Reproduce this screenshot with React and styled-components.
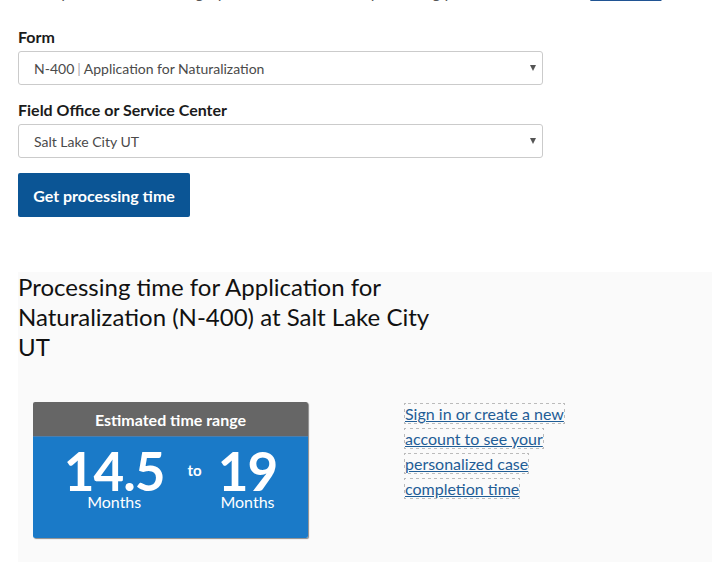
import React from "react";
import styled, { createGlobalStyle } from "styled-components";

const Global = createGlobalStyle`
  html, body { margin: 0; padding: 0; background: #fff; }
  body { font-family: "Lato", "Open Sans", sans-serif; color: #1b1b1b; }
  * { box-sizing: border-box; }
`;

const Page = styled.div`
  padding: 0 0 0 18px;
  overflow: hidden;
  height: 562px;
`;

const Intro = styled.p`
  margin: -18px 0 0 0;
  font-size: 16px;
  line-height: 20px;
  font-style: italic;
  color: #555;
  white-space: nowrap;
`;

const IntroLink = styled.a`
  color: #205493;
  text-decoration: underline;
  text-underline-offset: 2px;
  font-style: normal;
`;

const FormBlock = styled.form`
  width: 525px;
  margin-top: 25px;
  display: flex;
  flex-direction: column;
`;

const Label = styled.label`
  font-weight: 700;
  font-size: 16px;
  line-height: 20px;
  color: #1b1b1b;
  margin-top: ${(p) => p.$top || 0}px;
  margin-bottom: 4px;
`;

const SelectBox = styled.div`
  position: relative;
  height: 34px;
  border: 1px solid #cbcbcb;
  border-radius: 3px;
  background: #fff;
  display: flex;
  align-items: center;
  padding: 0 30px 0 15px;
  font-size: 14px;
  color: #4a4a4a;
`;

const Caret = styled.span`
  position: absolute;
  right: 6px;
  top: 50%;
  transform: translateY(-50%);
  width: 0;
  height: 0;
  border-left: 3.5px solid transparent;
  border-right: 3.5px solid transparent;
  border-top: 6px solid #555;
`;

const Sep = styled.span`
  color: #aaa;
  margin: 0 3px;
`;

const Button = styled.button`
  align-self: flex-start;
  margin-top: 15px;
  width: 172px;
  height: 44px;
  background: #0b5595;
  color: #fff;
  border: none;
  border-radius: 2px;
  font-family: inherit;
  font-weight: 700;
  font-size: 16px;
  cursor: pointer;
`;

const Results = styled.section`
  margin-top: 55px;
  background: #fafafa;
  padding-bottom: 60px;
`;

const Heading = styled.h2`
  margin: 0;
  max-width: 440px;
  font-size: 24px;
  line-height: 30px;
  font-weight: 400;
  color: #111;
`;

const Row = styled.div`
  display: flex;
  align-items: flex-start;
  margin-top: 40px;
  padding-left: 15px;
`;

const Card = styled.div`
  width: 275px;
  border-radius: 2px;
  overflow: hidden;
  box-shadow: 1px 1px 1px rgba(0, 0, 0, 0.45);
`;

const CardHead = styled.div`
  height: 35px;
  background: #666;
  color: #fff;
  font-weight: 700;
  font-size: 16px;
  display: flex;
  align-items: center;
  justify-content: center;
  border-bottom: 1px solid #4a7fb0;
`;

const CardBody = styled.div`
  background: #1a7ac8;
  color: #fff;
  height: 101px;
  display: flex;
  justify-content: center;
  align-items: flex-start;
  padding-top: 13px;
`;

const Figure = styled.div`
  display: flex;
  flex-direction: column;
  align-items: center;
`;

const Big = styled.span`
  font-size: 53px;
  line-height: 42px;
  font-weight: 700;
  letter-spacing: -1px;
`;

const Unit = styled.span`
  font-size: 16px;
  line-height: 16px;
  margin-top: 2px;
`;

const To = styled.span`
  font-size: 15px;
  font-weight: 700;
  margin: 11px 16px 0 23px;
`;

const Aside = styled.div`
  margin-left: 97px;
  margin-top: -1px;
  width: 175px;
  font-size: 16px;
  line-height: 25px;
`;

const SignLink = styled.a`
  color: #1f5d96;
  text-decoration: underline;
  outline: 1px dotted #bbb;
`;

export default function App() {
  return (
    <>
      <Global />
      <Page>
        <Intro>
          Select your form, form category, and the office that is processing your case. For details, <IntroLink href="#">read more</IntroLink>
        </Intro>
        <FormBlock>
          <Label $top={0}>Form</Label>
          <SelectBox>
            N-400<Sep>|</Sep>Application for Naturalization
            <Caret />
          </SelectBox>
          <Label $top={15}>Field Office or Service Center</Label>
          <SelectBox>
            Salt Lake City UT
            <Caret />
          </SelectBox>
          <Button type="button">Get processing time</Button>
        </FormBlock>
        <Results>
          <Heading>Processing time for Application for Naturalization (N-400) at Salt Lake City UT</Heading>
          <Row>
            <Card>
              <CardHead>Estimated time range</CardHead>
              <CardBody>
                <Figure>
                  <Big>14.5</Big>
                  <Unit>Months</Unit>
                </Figure>
                <To>to</To>
                <Figure>
                  <Big>19</Big>
                  <Unit>Months</Unit>
                </Figure>
              </CardBody>
            </Card>
            <Aside>
              <SignLink href="#">Sign in or create a new account to see your personalized case completion time</SignLink>
            </Aside>
          </Row>
        </Results>
      </Page>
    </>
  );
}
